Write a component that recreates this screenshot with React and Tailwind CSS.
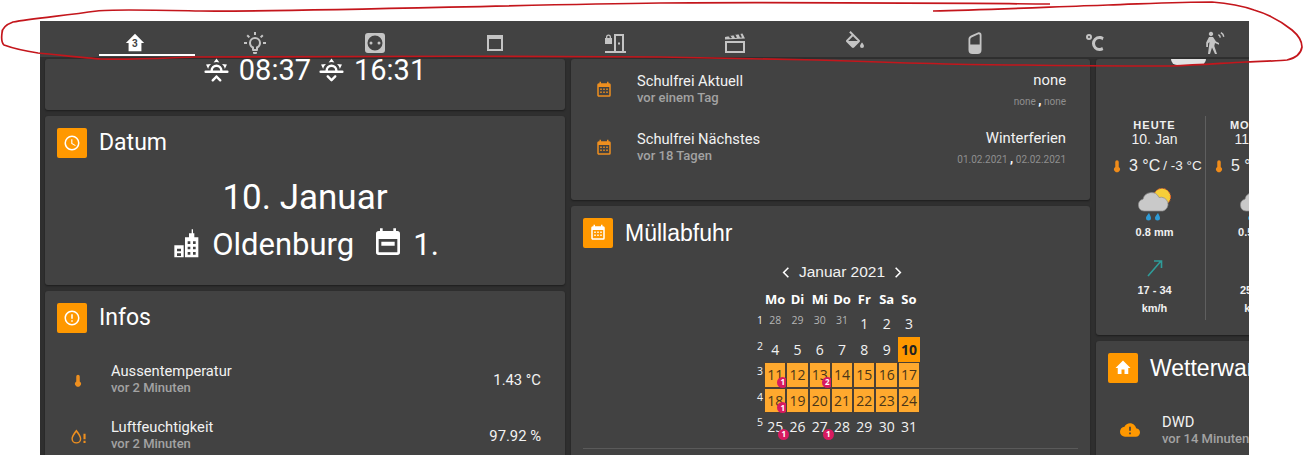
import React from 'react';

const paths = {
  clock: 'M12,20A8,8 0 0,0 20,12A8,8 0 0,0 12,4A8,8 0 0,0 4,12A8,8 0 0,0 12,20M12,2A10,10 0 0,1 22,12A10,10 0 0,1 12,22C6.47,22 2,17.5 2,12A10,10 0 0,1 12,2M12.5,7V12.25L17,14.92L16.25,16.15L11,13V7H12.5Z',
  alert: 'M11,15H13V17H11V15M11,7H13V13H11V7M12,2C6.47,2 2,6.5 2,12A10,10 0 0,0 12,22A10,10 0 0,0 22,12A10,10 0 0,0 12,2M12,20A8,8 0 0,1 4,12A8,8 0 0,1 12,4A8,8 0 0,1 20,12A8,8 0 0,1 12,20Z',
  calendarMonth: 'M9,10V12H7V10H9M13,10V12H11V10H13M17,10V12H15V10H17M19,3A2,2 0 0,1 21,5V19A2,2 0 0,1 19,21H5C3.89,21 3,20.1 3,19V5A2,2 0 0,1 5,3H6V1H8V3H16V1H18V3H19M19,19V8H5V19H19M9,14V16H7V14H9M13,14V16H11V14H13M17,14V16H15V14H17Z',
  home: 'M10,20V14H14V20H19V12H22L12,2L2,12H5V20H10Z',
  homeFull: 'M12,2L22,12H19V21H5V12H2L12,2Z',
  bulb: 'M20,11H23V13H20V11M1,11H4V13H1V11M13,1V4H11V1H13M4.92,3.5L7.05,5.64L5.63,7.05L3.5,4.93L4.92,3.5M19.07,3.5L20.5,4.93L18.37,7.05L16.95,5.64L19.07,3.5M12,6A6,6 0 0,1 18,12C18,14.22 16.79,16.16 15,17.2V19A1,1 0 0,1 14,20H10A1,1 0 0,1 9,19V17.2C7.21,16.16 6,14.22 6,12A6,6 0 0,1 12,6M14,21V22A1,1 0 0,1 13,23H11A1,1 0 0,1 10,22V21H14M11,18H13V15.87C14.73,15.43 16,13.86 16,12A4,4 0 0,0 12,8A4,4 0 0,0 8,12C8,13.86 9.27,15.43 11,15.87V18Z',
  socket: 'M5,2H19A3,3 0 0,1 22,5V19A3,3 0 0,1 19,22H5A3,3 0 0,1 2,19V5A3,3 0 0,1 5,2M12,4.5A7.5,7.5 0 0,0 4.5,12A7.5,7.5 0 0,0 12,19.5A7.5,7.5 0 0,0 19.5,12A7.5,7.5 0 0,0 12,4.5M8,10.5A1.5,1.5 0 0,1 9.5,12A1.5,1.5 0 0,1 8,13.5A1.5,1.5 0 0,1 6.5,12A1.5,1.5 0 0,1 8,10.5M16,10.5A1.5,1.5 0 0,1 17.5,12A1.5,1.5 0 0,1 16,13.5A1.5,1.5 0 0,1 14.5,12A1.5,1.5 0 0,1 16,10.5Z',
  blind: 'M4,4H20V20H4V4M6,8V18H18V8H6Z',
  door: 'M11,3H21V20H23V22H2V20H11V3M13,5V20H19V5H13M15,11.5H17V13.5H15V11.5M3,7V6A2.5,2.5 0 0,1 8,6V7H9V13H2V7H3M4.3,7H6.7V6A1.2,1.2 0 0,0 4.3,6V7Z',
  scene: 'M2,10H22V22H2V10M4,12V20H20V12H4M2,8.5V6L19.5,2.5L22,7.5L2,8.5M7,7.2L9,7.1L7.5,4.8L5.6,5.2L7,7.2M12,6.9L14,6.8L12.5,3.8L10.6,4.2L12,6.9M17,6.6L19,6.5L17.5,2.9L15.6,3.3L17,6.6Z',
  fill: 'M19,11.5C19,11.5 17,13.67 17,15A2,2 0 0,0 19,17A2,2 0 0,0 21,15C21,13.67 19,11.5 19,11.5M5.21,10L10,5.21L14.79,10M16.56,8.94L7.62,0L6.21,1.41L8.59,3.79L3.44,8.94C2.85,9.5 2.85,10.47 3.44,11.06L8.94,16.56C9.23,16.85 9.62,17 10,17C10.38,17 10.77,16.85 11.06,16.56L16.56,11.06C17.15,10.47 17.15,9.5 16.56,8.94Z',
  speaker: 'M5.5,8C5.5,6.5 6.5,5.5 8,4.5L15,1.5C17,1 18.5,2 18.5,4V19A4,4 0 0,1 14.5,23H9.5A4,4 0 0,1 5.5,19V8M7.3,9V13.5H16.7V4C16.7,3.2 16,3 15.5,3.2L8.5,6.5C7.7,7 7.3,8 7.3,9Z',
  celsius: 'M16.5,5C18.05,5 19.5,5.47 20.69,6.28L19.53,9.17C18.73,8.44 17.67,8 16.5,8C14,8 12,10 12,12.5C12,15 14,17 16.5,17C17.53,17 18.47,16.66 19.23,16.08L20.37,18.93C19.24,19.61 17.92,20 16.5,20A7.5,7.5 0 0,1 9,12.5A7.5,7.5 0 0,1 16.5,5M6,3A3,3 0 0,1 9,6A3,3 0 0,1 6,9A3,3 0 0,1 3,6A3,3 0 0,1 6,3M6,5A1,1 0 0,0 5,6A1,1 0 0,0 6,7A1,1 0 0,0 7,6A1,1 0 0,0 6,5Z',
  motion: 'M8,0.8A2.2,2.2 0 1,1 7.99,0.8M6,6H10L13,10.5L16,12V13.7L12,12L11.3,15L14,23H12L9,16.5L7,23H5L6.5,11L5,12.5V16H3.2V11.5L6,6M15.8,3A4,4 0 0,1 18,6.5L16.6,6.7A3,3 0 0,0 15,4.2L15.8,3M18.3,1A6,6 0 0,1 21.5,5.5L20.1,5.9A5,5 0 0,0 17.5,2.2L18.3,1Z',
  sunUp: 'M3,12H7A5,5 0 0,1 12,7A5,5 0 0,1 17,12H21A1,1 0 0,1 22,13A1,1 0 0,1 21,14H3A1,1 0 0,1 2,13A1,1 0 0,1 3,12M15,12A3,3 0 0,0 12,9A3,3 0 0,0 9,12H15M12,2L14.39,5.42C13.65,5.15 12.84,5 12,5C11.16,5 10.35,5.15 9.61,5.42L12,2M3.34,7L7.5,6.65C6.9,7.16 6.36,7.78 5.94,8.5C5.5,9.24 5.25,10 5.11,10.79L3.34,7M20.65,7L18.88,10.79C18.74,10 18.47,9.23 18.05,8.5C17.63,7.78 17.1,7.15 16.5,6.64L20.65,7M12.71,16.3L15.82,19.41C16.21,19.8 16.21,20.43 15.82,20.82C15.43,21.21 14.8,21.21 14.41,20.82L12,18.41L9.59,20.82C9.2,21.21 8.57,21.21 8.18,20.82C7.79,20.43 7.79,19.8 8.18,19.41L11.29,16.3C11.5,16.1 11.74,16 12,16C12.26,16 12.5,16.1 12.71,16.3Z',
  sunDown: 'M3,12H7A5,5 0 0,1 12,7A5,5 0 0,1 17,12H21A1,1 0 0,1 22,13A1,1 0 0,1 21,14H3A1,1 0 0,1 2,13A1,1 0 0,1 3,12M15,12A3,3 0 0,0 12,9A3,3 0 0,0 9,12H15M12,2L14.39,5.42C13.65,5.15 12.84,5 12,5C11.16,5 10.35,5.15 9.61,5.42L12,2M3.34,7L7.5,6.65C6.9,7.16 6.36,7.78 5.94,8.5C5.5,9.24 5.25,10 5.11,10.79L3.34,7M20.65,7L18.88,10.79C18.74,10 18.47,9.23 18.05,8.5C17.63,7.78 17.1,7.15 16.5,6.64L20.65,7M12.71,20.7L15.82,17.59C16.21,17.2 16.21,16.57 15.82,16.18C15.43,15.79 14.8,15.79 14.41,16.18L12,18.59L9.59,16.18C9.2,15.79 8.57,15.79 8.18,16.18C7.79,16.57 7.79,17.2 8.18,17.59L11.29,20.7C11.5,20.9 11.74,21 12,21C12.26,21 12.5,20.9 12.71,20.7Z',
  city: 'M14,1H15V4H16V7H19V22H9V7H12V4H14V1M11,10V12H13V10H11M15,10V12H17V10H15M11,14V16H13V14H11M15,14V16H17V14H15M11,18V20H13V18H11M15,18V20H17V18H15M1,13H8V22H1V13M3,15.5V17.5H6V15.5H3M3,19V21H6V19H3Z',
  calendarBand: 'M19,3H18V1H16V3H8V1H6V3H5A2,2 0 0,0 3,5V19A2,2 0 0,0 5,21H19A2,2 0 0,0 21,19V5A2,2 0 0,0 19,3M19,19H5V9H19V19M7,11H17V14H7V11Z',
  thermometer: 'M12,2A3,3 0 0,1 15,5V13.5A5,5 0 1,1 9,13.5V5A3,3 0 0,1 12,2Z',
  waterAlert: 'M9,2C9,2 2,10 2,15A7,7 0 0,0 16,15C16,10 9,2 9,2M9,6C11,8.8 14,12.8 14,15A5,5 0 0,1 4,15C4,12.8 7,8.8 9,6M19,8H22V16H19V8M19,18H22V21H19V18Z',
  cloudAlert: 'M19.35,10.03C18.67,6.59 15.64,4 12,4C9.11,4 6.6,5.64 5.35,8.03C2.34,8.36 0,10.9 0,14A6,6 0 0,0 6,20H19A5,5 0 0,0 24,15C24,12.36 21.95,10.22 19.35,10.03M13,17H11V15H13V17M13,13H11V8H13V13Z',
};

const Icon = ({ name, className }) => (
  <svg viewBox="0 0 24 24" fill="currentColor" className={className}>
    <path d={paths[name]} fillRule="evenodd" />
  </svg>
);

const navItems = ['homeFull', 'bulb', 'socket', 'blind', 'door', 'scene', 'fill', 'speaker', 'celsius', 'motion'];

const TopBar = () => (
  <div className="flex h-[36px] shrink-0 bg-[#424242] pl-[35px] overflow-hidden">
    {navItems.map((name, i) => (
      <div
        key={name}
        className={`relative flex h-[35px] w-[120px] shrink-0 items-center justify-center pt-[9px] ${
          i === 0 ? 'text-white' : 'text-[#c4c4c4]'
        }`}
      >
        <Icon name={name} className={i === 0 ? 'h-[22px] w-[22px]' : 'h-[24px] w-[24px]'} />
        {i === 0 && (
          <>
            <span className="absolute left-[57px] top-[17px] text-[10px] font-bold leading-[12px] text-[#424242]">3</span>
            <span className="absolute bottom-0 left-[24px] right-0 h-[2px] bg-white" />
          </>
        )}
      </div>
    ))}
  </div>
);

const Card = ({ className, children }) => (
  <div className={`shrink-0 rounded-[3px] bg-[#424242] shadow-[0_1px_2px_rgba(0,0,0,0.4)] ${className}`}>{children}</div>
);

const CardHeader = ({ icon, title, arial }) => (
  <div className="flex items-center gap-[12px] pl-[12px] pt-[12px]">
    <div className="flex h-[30px] w-[30px] items-center justify-center rounded-[2px] bg-[#ff9800] text-[#fff]">
      <Icon name={icon} className="h-[18px] w-[18px]" />
    </div>
    <span className={`text-[23px] leading-[30px] text-white ${arial ? "font-['Liberation_Sans',sans-serif]" : ''}`}>{title}</span>
  </div>
);

const ListRow = ({ icon, iconClass, title, sub, value, detail, rowClass }) => (
  <div className={`flex items-center pl-[21px] pr-[24px] ${rowClass}`}>
    <div className="flex w-[24px] shrink-0 justify-center text-[#ee8f1f]">
      <Icon name={icon} className={iconClass} />
    </div>
    <div className="ml-[21px] flex-1 whitespace-nowrap pb-[2px]">
      <div className="text-[14.7px] leading-[18px] text-[#f2f2f2]">{title}</div>
      <div className="text-[13px] font-medium leading-[16px] text-[#a3a3a3]">{sub}</div>
    </div>
    <div className="text-right">
      <div className="text-[14.8px] leading-[18px] text-[#f2f2f2]">{value}</div>
      {detail && <div className="mt-[4px] text-[10px] leading-[16px] text-[#8f8f8f]">{detail[0]} <span className="text-[13px] font-bold text-white">,</span> {detail[1]}</div>}
    </div>
  </div>
);

const WeatherIcon = () => (
  <svg viewBox="0 0 40 40" className="mx-auto h-[40px] w-[40px]">
    <circle cx="27" cy="15" r="8.5" fill="#f6cf3a" stroke="#e8682a" strokeWidth="1" strokeDasharray="2 1" />
    <path d="M9,29A6,6 0 0,1 8,17.2A8.5,8.5 0 0,1 24,15.5A6.5,6.5 0 0,1 28,29Z" fill="#c9c9c9" stroke="#8c8c8c" strokeWidth="0.7" />
    <path d="M14,31C14,31 11,34.5 11,36A2.5,2.5 0 0,0 16,36C16,34.5 14,31 14,31M23,31C23,31 20,34.5 20,36A2.5,2.5 0 0,0 25,36C25,34.5 23,31 23,31Z" fill="#2e9bd6" />
  </svg>
);

const Forecast = ({ day, date, hi, lo, rain, wind, divider }) => (
  <div className={`h-[204px] w-[102px] shrink-0 pt-[2px] text-center text-[#f0f0f0] font-['Liberation_Sans',sans-serif] ${divider ? 'border-r border-[#5f5f5f]' : ''}`}>
    <div className="h-[14px] text-[11px] font-bold leading-[14px] tracking-[1px]">{day}</div>
    <div className="h-[14px] text-[14px] leading-[14px]">{date}</div>
    <div className="mt-[10px] flex h-[20px] items-center whitespace-nowrap pl-[6px] leading-[20px]">
      <Icon name="thermometer" className="h-[20px] w-[14px] shrink-0 text-[#f08c1a]" />
      <span className="ml-[5px] text-[16px]">{hi}</span>
      <span className="ml-[3px] text-[13.5px]">/ {lo}</span>
    </div>
    <div className="mt-[6px]"><WeatherIcon /></div>
    <div className="mt-[3px] h-[14px] text-[11px] font-bold leading-[14px]">{rain}</div>
    <div className="mt-[16px] flex h-[24px] justify-center">
      <svg viewBox="0 0 24 24" className="h-[24px] w-[24px]" fill="none" stroke="#2f9c99" strokeWidth="1.6">
        <path d="M5,21L18,6M11,6H18.5V13" />
      </svg>
    </div>
    <div className="mt-[4px] h-[14px] text-[11px] font-bold leading-[14px]">{wind}</div>
    <div className="mt-[4px] h-[14px] text-[11px] font-bold leading-[14px]">km/h</div>
  </div>
);

const weeks = [
  { nr: 1, days: [[28, 'old'], [29, 'old'], [30, 'old'], [31, 'old'], [1], [2], [3]] },
  { nr: 2, days: [[4], [5], [6], [7], [8], [9], [10, 'today']] },
  { nr: 3, days: [[11, 'on', 1], [12, 'on'], [13, 'on', 2], [14, 'on'], [15, 'on'], [16, 'on'], [17, 'on']] },
  { nr: 4, days: [[18, 'on', 1], [19, 'on'], [20, 'on'], [21, 'on'], [22, 'on'], [23, 'on'], [24, 'on']] },
  { nr: 5, days: [[25, '', 1], [26], [27, '', 1], [28], [29], [30], [31]] },
];

const dayClass = {
  old: 'text-[10.5px] text-[#b5b5b5] pb-[6px]',
  on: 'bg-[#ffa92e] border border-[#4a4036] text-[#4a3518]',
  today: 'bg-[#ff9800] font-bold text-[#222]',
};

const Calendar = () => (
  <div className="ml-[183px] w-[166px] font-['Open_Sans',sans-serif]">
    <div className="ml-[10px] flex h-[20px] items-center justify-center gap-[9px] text-[15.5px] text-[#f2f2f2] font-['Liberation_Sans',sans-serif]">
      <svg viewBox="0 0 10 14" className="h-[11px] w-[8px]" fill="none" stroke="white" strokeWidth="2"><path d="M8,1L2,7L8,13" /></svg>
      <span className="whitespace-nowrap">Januar 2021</span>
      <svg viewBox="0 0 10 14" className="h-[11px] w-[8px]" fill="none" stroke="white" strokeWidth="2"><path d="M2,1L8,7L2,13" /></svg>
    </div>
    <div className="mb-[2px] mt-[7px] grid h-[20px] grid-cols-[10px_repeat(7,22.3px)] items-center text-center text-[13px] font-bold leading-[20px] text-white">
      <span />
      {['Mo', 'Di', 'Mi', 'Do', 'Fr', 'Sa', 'So'].map((d) => <span key={d} className="whitespace-nowrap">{d}</span>)}
    </div>
    {weeks.map((w) => (
      <div key={w.nr} className="grid h-[25.6px] grid-cols-[10px_repeat(7,22.3px)] text-center text-[14px] text-[#f2f2f2]">
        <span className="pl-[3px] text-left text-[10.5px] leading-[18px]">{w.nr}</span>
        {w.days.map(([n, kind, badge], i) => (
          <span key={i} className={`relative flex items-center justify-center ${dayClass[kind] || ''}`}>
            {n}
            {badge && (
              <span className="absolute bottom-[-1px] right-[-3px] flex h-[11px] w-[11px] items-center justify-center rounded-full bg-[#d81b60] text-[8px] font-bold leading-none text-white">
                {badge}
              </span>
            )}
          </span>
        ))}
      </div>
    ))}
  </div>
);

const App = () => (
  <div className="relative h-[455px] w-[1304px] overflow-hidden bg-white pl-[40px] pt-[21px] font-['Roboto',sans-serif]">
    <div className="flex h-[434px] w-[1209px] flex-col overflow-hidden bg-[#2f2f2f]">
      <TopBar />
      <div className="flex gap-[6px] pl-[5px] pt-[2px] overflow-hidden">
        {/* left column */}
        <div className="flex w-[520px] shrink-0 flex-col gap-[6px]">
          <Card className="flex h-[51px] justify-center text-white">
            <div className="ml-[18px] flex h-[22px] items-center text-[29px] leading-[22px]">
              <Icon name="sunUp" className="h-[29px] w-[29px]" />
              <span className="ml-[8px]">08:37</span>
              <Icon name="sunDown" className="ml-[6px] h-[29px] w-[29px]" />
              <span className="ml-[8px]">16:31</span>
            </div>
          </Card>
          <Card className="h-[169px]">
            <CardHeader icon="clock" title="Datum" />
            <div className="mt-[18px] h-[44px] text-center text-[35px] leading-[44px] text-white">10. Januar</div>
            <div className="ml-[2px] mt-[7px] flex h-[36px] items-center justify-center text-[31px] text-white">
              <Icon name="city" className="mb-[2px] h-[32px] w-[32px]" />
              <span className="ml-[7px]">Oldenburg</span>
              <Icon name="calendarBand" className="mb-[4px] ml-[18px] h-[32px] w-[32px]" />
              <span className="ml-[9px]">1.</span>
            </div>
          </Card>
          <Card className="h-[200px]">
            <CardHeader icon="alert" title="Infos" />
            <div className="mt-[19px]">
              <ListRow rowClass="h-[56px]" icon="thermometer" iconClass="h-[19px] w-[14px]" title="Aussentemperatur" sub="vor 2 Minuten" value="1.43 °C" />
              <ListRow rowClass="h-[56px]" icon="waterAlert" iconClass="h-[17px] w-[17px]" title="Luftfeuchtigkeit" sub="vor 2 Minuten" value="97.92 %" />
            </div>
          </Card>
        </div>
        {/* middle column */}
        <div className="flex w-[519px] shrink-0 flex-col gap-[6px]">
          <Card className="h-[141px] pt-[2px]">
            <ListRow rowClass="h-[58px]" icon="calendarMonth" iconClass="h-[18px] w-[18px]" title="Schulfrei Aktuell" sub="vor einem Tag" value="none" detail={['none', 'none']} />
            <ListRow rowClass="h-[58px]" icon="calendarMonth" iconClass="h-[18px] w-[18px]" title="Schulfrei Nächstes" sub="vor 18 Tagen" value="Winterferien" detail={['01.02.2021', '02.02.2021']} />
          </Card>
          <Card className="h-[300px]">
            <CardHeader icon="calendarMonth" title="Müllabfuhr" arial />
            <div className="mt-[14px]"><Calendar /></div>
            <div className="mx-[12px] mt-[9px] h-px bg-[#5a5a5a]" />
          </Card>
        </div>
        {/* right column */}
        <div className="flex w-[520px] shrink-0 flex-col gap-[6px]">
          <Card className="h-[276px]">
            <div className="ml-[75px] h-[6px] w-[35px] rounded-b-full bg-[#e2e2e2]" />
            <div className="ml-[8px] mt-[51px] flex">
              <Forecast divider day="HEUTE" date="10. Jan" hi="3 °C" lo="-3 °C" rain="0.8 mm" wind="17 - 34" />
              <Forecast day="MONTAG" date="11. Jan" hi="5 °C" lo="-1 °C" rain="0.5 mm" wind="25 - 41" />
            </div>
          </Card>
          <Card className="h-[120px]">
            <CardHeader icon="home" title="Wetterwarnung" arial />
            <div className="mt-[18px]">
              <div className="flex h-[58px] items-center pl-[24px]">
                <Icon name="cloudAlert" className="h-[20px] w-[20px] text-[#ff9800]" />
                <div className="ml-[22px] whitespace-nowrap">
                  <div className="text-[14.7px] leading-[18px] text-[#f2f2f2]">DWD</div>
                  <div className="text-[13px] font-medium leading-[16px] text-[#a3a3a3]">vor 14 Minuten</div>
                </div>
              </div>
            </div>
          </Card>
        </div>
      </div>
    </div>
    {/* red marker scribble around the tab bar */}
    <svg viewBox="0 0 1304 455" className="pointer-events-none absolute left-0 top-0 h-[455px] w-[1304px]" fill="none" stroke="#c4161c" strokeWidth="1.7">
      <path d="M1050,4C900,3 780,2 660,3C500,5 300,12 200,11C150,10 110,9 97,11C60,16 30,19 13,22C5,25 2,28 2,33C1,40 2,43 4,45C15,49 25,51 38,53C60,55 85,58 101,59C130,60 165,58 194,57C300,56 520,56 660,57C720,58 770,59 817,60C900,63 970,65 1025,65C1080,66 1130,66 1171,66C1200,65 1225,63 1246,62C1265,61 1280,61 1287,60C1296,58 1301,53 1302,47C1302,40 1298,35 1292,30C1282,22 1268,14 1254,10C1240,5 1225,3 1212,2C1180,2 1140,4 1108,5C1050,7 985,10 933,11" />
    </svg>
  </div>
);

export default App;
